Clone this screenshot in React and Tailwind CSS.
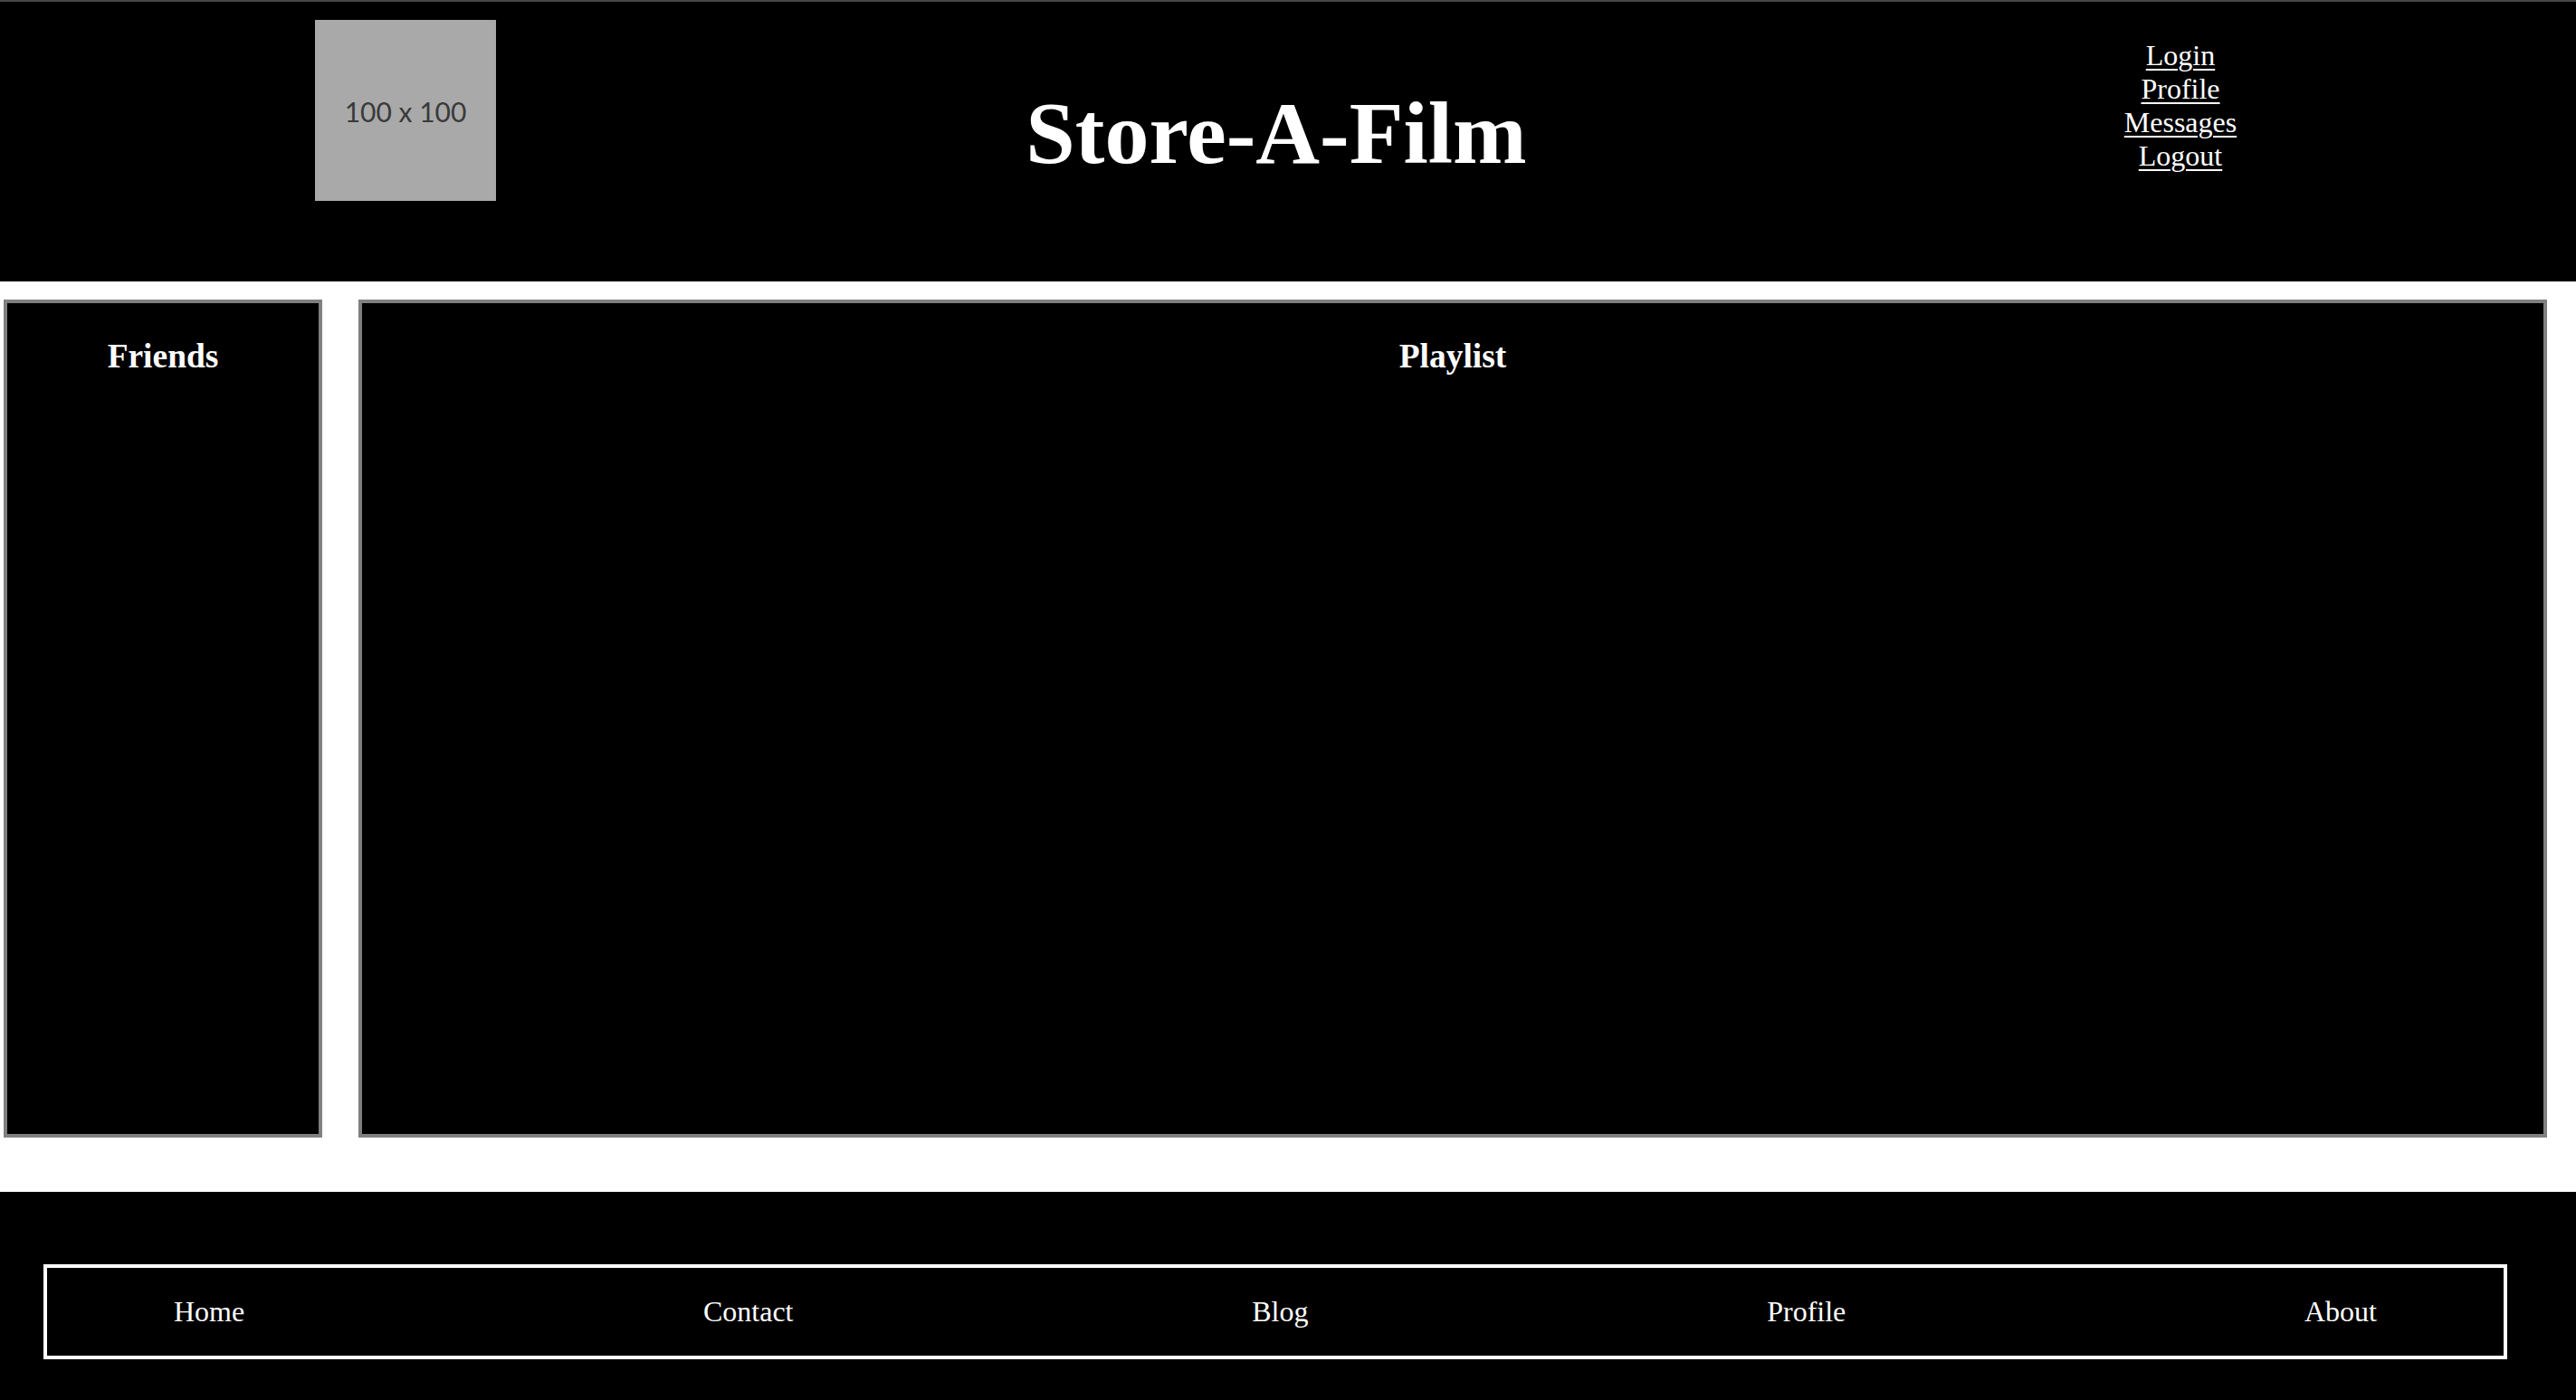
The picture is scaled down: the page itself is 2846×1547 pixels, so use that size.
import React from 'react';

// Header links + footer nav
const topLinks = ['Login', 'Profile', 'Messages', 'Logout'];
const footerLinks = ['Home', 'Contact', 'Blog', 'Profile', 'About'];

const serif = "font-['Liberation_Serif','Times_New_Roman',serif]";

const App = () => {
  return (
    <div className={`w-[2846px] min-h-[1547px] bg-white ${serif}`}>
      {/* Header */}
      <header className="h-[311px] bg-black border-t-2 border-[#464646] flex items-start">
        <div className="ml-[348px] mt-[20px] w-[200px] h-[200px] bg-[#a9a9a9] flex items-center justify-center">
          <span className="font-['Lato',sans-serif] text-[30px] text-[#3a3a3a] mt-[3px]">100 x 100</span>
        </div>
        <div className="ml-[562px] mt-[90px] w-[600px] text-center">
          <h1 className="text-white font-bold text-[98px] leading-[110px]">Store-A-Film</h1>
        </div>
        <nav className="ml-[599px] mt-[41px] w-[200px] flex flex-col items-center text-[32px] leading-[37px]">
          {topLinks.map(link => (
            <a key={link} href="#" className="text-white underline underline-offset-[4px] decoration-[2px]">
              {link}
            </a>
          ))}
        </nav>
      </header>

      {/* Main panels */}
      <main className="flex pt-[20px] pl-[4px] pr-[32px] gap-[40px]">
        <section className="w-[352px] h-[926px] bg-black border-4 border-[#808080]">
          <h3 className="pt-[37px] text-center text-white font-bold text-[37.44px] leading-[43px]">Friends</h3>
        </section>
        <section className="flex-1 h-[926px] bg-black border-4 border-[#808080]">
          <h3 className="pt-[37px] text-center text-white font-bold text-[37.44px] leading-[43px]">Playlist</h3>
        </section>
      </main>

      {/* Footer */}
      <footer className="mt-[60px] h-[230px] bg-black pt-[80px] pl-[48px] pr-[76px]">
        <div className="h-[105px] border-4 border-white flex items-center justify-between px-[140px] text-[32px] leading-[37px] text-white">
          {footerLinks.map((link, i) => (
            <span key={i}>{link}</span>
          ))}
        </div>
      </footer>
    </div>
  );
};

export default App;
